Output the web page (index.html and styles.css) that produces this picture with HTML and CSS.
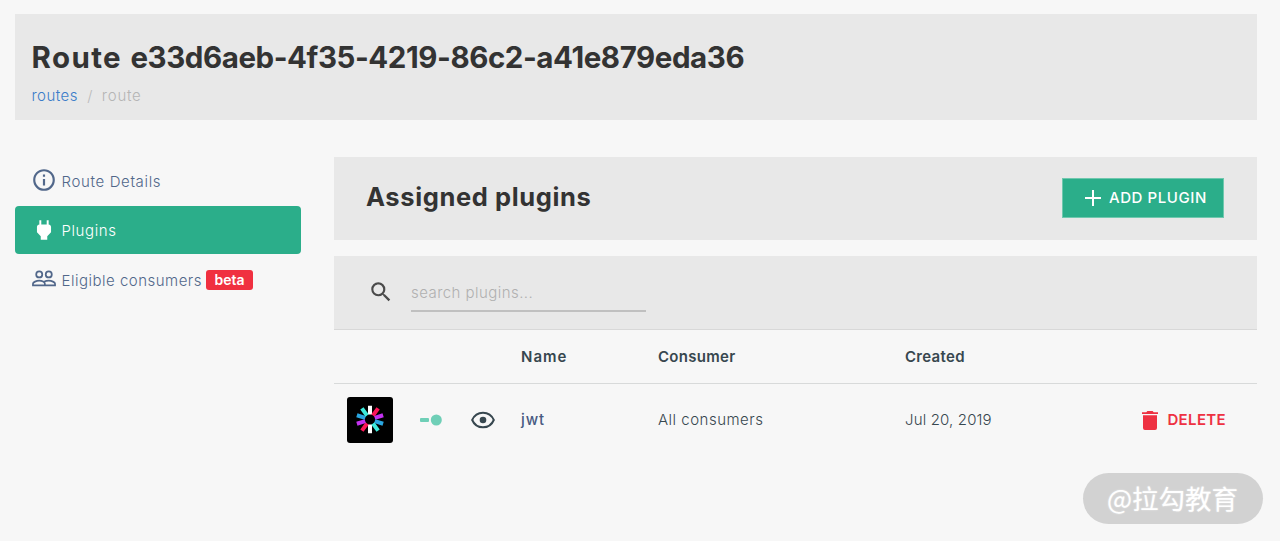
FILE: index.html
```html
<!DOCTYPE html>
<html lang="en">
<head>
<meta charset="utf-8">
<title>Route plugins</title>
<link rel="stylesheet" href="styles.css">
</head>
<body>
<header class="page-header">
  <h1 class="page-title"><span class="title-word">Route </span><span class="title-id">e33d6aeb-4f35-4219-86c2-a41e879eda36</span></h1>
  <nav class="breadcrumb"><a class="crumb-link" href="#">routes</a><span class="crumb-sep">/</span><span class="crumb-current">route</span></nav>
</header>
<div class="layout">
  <nav class="sidebar">
    <a class="side-item" href="#">
      <svg class="side-icon" viewBox="0 0 24 24"><path d="M11 9h2V7h-2m1 13c-4.41 0-8-3.59-8-8s3.59-8 8-8 8 3.59 8 8-3.59 8-8 8m0-18A10 10 0 1 0 22 12 10 10 0 0 0 12 2m-1 15h2v-6h-2z"/></svg>
      <span class="side-label label-details">Route Details</span>
    </a>
    <a class="side-item active" href="#">
      <svg class="side-icon" viewBox="0 0 24 24"><path d="M16.300 7V3h-1.800v4h-5V3H7.700v4C6.500 7 5.500 8 5.500 9.200v4.800L9 17.800V21h6v-3.200l3.500-3.800V9.200C18.500 8 17.500 7 16.300 7z"/></svg>
      <span class="side-label label-plugins">Plugins</span>
    </a>
    <a class="side-item" href="#">
      <svg class="side-icon" viewBox="0 0 24 24"><g class="outline"><circle cx="7.600" cy="7.800" r="2.800"/><circle cx="16.400" cy="7.800" r="2.800"/><path d="M1.800 17.800v-1.500c0-1.500 3.200-2.700 5.800-2.700s5.200 1.200 5.200 2.700v1.500zM12.800 17.800h9.400v-1.500c0-1.500-3.200-2.700-5.800-2.700-1.600 0-3.200.4-4.400 1"/></g></svg>
      <span class="side-label label-eligible">Eligible consumers</span>
      <span class="badge">beta</span>
    </a>
  </nav>
  <main class="content">
    <section class="panel-head">
      <h2 class="panel-title">Assigned plugins</h2>
      <button class="add-button"><svg class="plus" viewBox="0 0 16 16"><path d="M8 0v16M0 8h16"/></svg><span class="add-label">ADD PLUGIN</span></button>
    </section>
    <section class="search-bar">
      <svg class="search-icon" viewBox="0 0 24 24"><path d="M9.500 3A6.500 6.500 0 0 1 16 9.500c0 1.610-.59 3.090-1.560 4.230l.27.270h.79l5 5-1.500 1.500-5-5v-.79l-.27-.27A6.516 6.516 0 0 1 9.500 16a6.500 6.500 0 0 1 0-13m0 2C7 5 5 7 5 9.500S7 14 9.500 14 14 12 14 9.500 12 5 9.500 5z"/></svg>
      <input class="search-input" type="text" placeholder="search plugins...">
    </section>
    <div class="row row-head">
      <span></span><span></span><span></span>
      <span class="th-name">Name</span><span class="th-consumer">Consumer</span><span class="th-created">Created</span><span></span>
    </div>
    <div class="row row-body">
      <svg class="logo" viewBox="0 0 46 46">
        <rect width="46" height="46" rx="3"/>
        <g transform="translate(23 22.500)">
          <path class="ray white" d="M0-5v-8.800M0 5v8.800"/>
          <path class="ray red" transform="rotate(36)" d="M0-5v-8.800M0 5v8.800"/>
          <path class="ray purple" transform="rotate(72)" d="M0-5v-8.800M0 5v8.800"/>
          <path class="ray blue" transform="rotate(108)" d="M0-5v-8.800M0 5v8.800"/>
          <path class="ray cyan" transform="rotate(144)" d="M0-5v-8.800M0 5v8.800"/>
        </g>
      </svg>
      <svg class="toggle" viewBox="0 0 22 12"><rect x="0" y="4" width="9" height="4" rx="1"/><circle cx="16.300" cy="6" r="5.500"/></svg>
      <svg class="eye" viewBox="0 0 24 18"><path d="M1.200 9C3.200 4.300 7.200 1.700 12 1.700S20.800 4.300 22.800 9C20.800 13.700 16.800 16.300 12 16.300S3.200 13.700 1.200 9z"/><circle cx="12" cy="9" r="3.300"/></svg>
      <a class="td-name" href="#">jwt</a><span class="td-consumer">All consumers</span><span class="td-created">Jul 20, 2019</span>
      <button class="delete"><svg class="trash" viewBox="0 0 16 20"><path d="M0 2.200h4.300L5.400 1h5.200l1.100 1.200H16v1.900H0zM1 5.300h14V18a2 2 0 0 1-2 2H3a2 2 0 0 1-2-2z"/></svg><span class="delete-label">DELETE</span></button>
    </div>
  </main>
</div>
<div class="watermark"><span>@拉勾教育</span></div>
</body>
</html>
```

FILE: styles.css
```css
* { box-sizing: border-box; }
body { margin: 0; padding: 14px 23px 0 15px; height: 541px; overflow: hidden; background: #f7f7f7; color: #37474f; font: 350 15px/20px Inter, "Liberation Sans", sans-serif; }
a { text-decoration: none; color: inherit; }
button { border: 0; padding: 0; background: none; font: inherit; display: flex; align-items: center; }
svg { display: block; }
h1, h2 { margin: 0; color: #333; font-weight: 700; white-space: nowrap; }
span, .td-name { white-space: nowrap; }

.page-header { height: 106px; padding: 25px 16.500px 0; background: #e8e8e8; }
.page-title { font-size: 29.5px; line-height: 36px; }
.title-word { letter-spacing: 1.400px; }
.title-id { letter-spacing: -0.430px; }
.breadcrumb { display: flex; margin-top: 11px; }
.crumb-link { color: #3b7cc9; letter-spacing: 0.450px; }
.crumb-sep { width: 24px; text-align: center; color: #bbb; }
.crumb-current { color: #b5b5b5; letter-spacing: 0.750px; }

.layout { display: grid; grid-template-columns: 286px 923px; gap: 33px; margin-top: 36.600px; }
.sidebar { display: flex; flex-direction: column; gap: 2px; color: #51678a; }
.side-item { display: flex; align-items: center; height: 47.500px; padding-left: 16px; border-radius: 4px; }
.side-icon { width: 26px; height: 26px; margin-right: 4.500px; fill: currentColor; }
.side-label { padding-top: 3px; }
.label-details { letter-spacing: 0.640px; }
.label-plugins { letter-spacing: 0.600px; }
.label-eligible { letter-spacing: 0.500px; }
.outline { fill: none; stroke: currentColor; stroke-width: 1.600; }
.active { background: #2bae8a; color: #fff; }
.badge { display: flex; align-items: center; justify-content: center; width: 47px; height: 20px; margin: 2px 0 0 4px; border-radius: 3px; background: #f03040; color: #fff; font-size: 14px; font-weight: 600; }

.panel-head { display: flex; align-items: center; justify-content: space-between; height: 83px; padding: 0 33px 0 32px; background: #e8e8e8; }
.panel-title { padding-bottom: 2px; font-size: 25.500px; line-height: 32px; letter-spacing: 0.620px; }
.add-button { width: 162px; height: 40px; padding-left: 22px; border: 1px solid #6fc8ae; background: #2bae8a; color: #fff; font-weight: 500; }
.add-label { letter-spacing: 0.580px; }
.plus { width: 16px; height: 16px; margin-right: 8px; fill: none; stroke: #fff; stroke-width: 2; }
.search-bar { display: flex; height: 74px; margin-top: 16px; padding: 20px 34px 0; background: #e8e8e8; border-bottom: 1px solid #d8d8d8; }
.search-icon { width: 26px; height: 26px; margin: 3px 17px 0 0; fill: #4a4a4a; }
.search-input { width: 235px; height: 36px; padding: 0; border: 0; border-bottom: 2px solid #c0c0c0; background: none; font: inherit; letter-spacing: 0.450px; outline: 0; }
.search-input::placeholder { color: #b0b0b0; opacity: 1; }
.row { display: grid; grid-template-columns: 73px 51px 50px 137px 247px 200px 1fr; align-items: center; padding: 0 31px 0 13px; }
.row-head { height: 54px; padding-top: 2px; border-bottom: 1px solid #d8dada; font-weight: 600; }
.th-name { letter-spacing: 1px; }
.th-consumer, .th-created { letter-spacing: 0.300px; }
.row-body { height: 72px; }
.logo { width: 46px; height: 46px; margin-left: -0.500px; }
.ray { stroke-width: 4; }
.white { stroke: #fff; }
.red { stroke: #fb1557; }
.purple { stroke: #c332f0; }
.blue { stroke: #29a5e0; }
.cyan { stroke: #3ceadb; }
.toggle { width: 22px; height: 12px; fill: #6fcfb7; }
.eye { width: 24px; height: 18px; fill: #37474f; }
.eye path { fill: none; stroke: #37474f; stroke-width: 2; }
.td-name { color: #485a82; font-weight: 500; letter-spacing: 0.900px; }
.td-consumer { letter-spacing: 0.500px; }
.td-created { letter-spacing: 0.150px; }
.delete { justify-self: end; color: #ee3142; font-weight: 600; }
.delete-label { letter-spacing: 0.350px; }
.trash { width: 16px; height: 20px; margin-right: 9px; fill: #ee3142; }
.watermark { position: absolute; left: 1083px; top: 473px; display: flex; align-items: center; justify-content: center; width: 180px; height: 51px; padding: 0 1px 2px 0; border-radius: 26px; background: #d2d2d2; color: #fff; font: 26.500px/36px "Noto Sans CJK SC", sans-serif; text-shadow: 0 0 2px rgba(255, 255, 255, 0.6); }
```
